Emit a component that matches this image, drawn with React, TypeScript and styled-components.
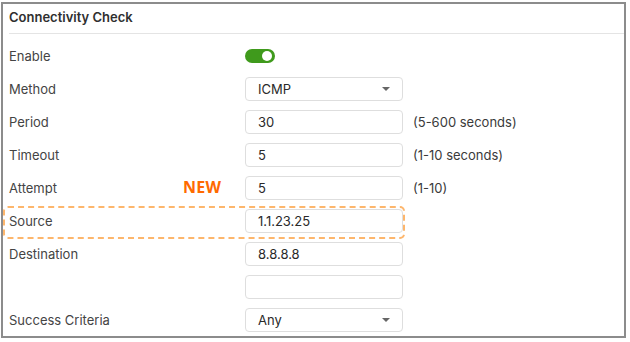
import React from "react";
import styled, { createGlobalStyle } from "styled-components";

const Global = createGlobalStyle`
  html, body { margin: 0; padding: 0; background: #fff; }
  body { font-family: Inter, "Noto Sans", sans-serif; }
`;

const Frame = styled.div`
  position: absolute;
  left: 1px;
  top: 2px;
  width: 621px;
  height: 332px;
  border: 2px solid #8c8c8c;
  background: #fff;
  overflow: hidden;
`;

const Header = styled.div`
  margin-left: 6px;
  height: 30px;
  box-sizing: border-box;
  display: flex;
  align-items: center;
  padding-bottom: 3px;
  font-size: 13px;
  font-weight: 600;
  color: #2f2f2f;
  border-bottom: 1px solid #e4e4e4;
`;

const Rows = styled.div`
  padding-top: 5px;
  display: flex;
  flex-direction: column;
`;

const Row = styled.div`
  position: relative;
  height: 33.1px;
  display: grid;
  grid-template-columns: 226px 158px auto;
  column-gap: 10px;
  align-items: center;
  padding-left: 6px;
`;

const Label = styled.div`
  font-size: 13px;
  color: #444;
`;

const Box = styled.div`
  height: 24px;
  box-sizing: border-box;
  border: 1px solid #dedede;
  border-radius: 4px;
  display: flex;
  align-items: center;
  justify-content: space-between;
  padding: 0 12px 0 12px;
  font-size: 13px;
  color: #2a2a2a;
  background: #fff;
`;

const Hint = styled.div`
  font-size: 13px;
  color: #3a3a3a;
`;

const Toggle = styled.div`
  width: 30px;
  height: 14px;
  border-radius: 7px;
  background: #3f9a1c;
  position: relative;
  &::after {
    content: "";
    position: absolute;
    right: 3px;
    top: 2px;
    width: 10px;
    height: 10px;
    border-radius: 50%;
    background: #fff;
  }
`;

const Caret = styled.span`
  width: 0;
  height: 0;
  border-left: 4px solid transparent;
  border-right: 4px solid transparent;
  border-top: 4px solid #666;
`;

const NewTag = styled.span`
  position: absolute;
  left: 180px;
  top: 5px;
  font-family: "Open Sans", sans-serif;
  font-weight: 700;
  font-size: 16px;
  color: #ff6a00;
  letter-spacing: 0.3px;
`;

const Highlight = styled.div`
  position: absolute;
  left: 0;
  top: 2px;
  width: 402px;
  height: 33px;
  box-sizing: border-box;
  border: 2px dashed #fdb66c;
  border-radius: 5px;
  pointer-events: none;
`;

type Field = {
  label: string;
  kind: "toggle" | "select" | "input";
  value?: string;
  hint?: string;
  tag?: boolean;
  highlight?: boolean;
};

const fields: Field[] = [
  { label: "Enable", kind: "toggle" },
  { label: "Method", kind: "select", value: "ICMP" },
  { label: "Period", kind: "input", value: "30", hint: "(5-600 seconds)" },
  { label: "Timeout", kind: "input", value: "5", hint: "(1-10 seconds)" },
  { label: "Attempt", kind: "input", value: "5", hint: "(1-10)", tag: true },
  { label: "Source", kind: "input", value: "1.1.23.25", highlight: true },
  { label: "Destination", kind: "input", value: "8.8.8.8" },
  { label: "", kind: "input", value: "" },
  { label: "Success Criteria", kind: "select", value: "Any" },
];

export default function App() {
  return (
    <>
      <Global />
      <Frame>
        <Header>Connectivity Check</Header>
        <Rows>
          {fields.map((f, i) => (
            <Row key={i}>
              <Label>{f.label}</Label>
              <div>
                {f.kind === "toggle" ? (
                  <Toggle />
                ) : (
                  <Box>
                    <span>{f.value}</span>
                    {f.kind === "select" && <Caret />}
                  </Box>
                )}
              </div>
              <Hint>{f.hint}</Hint>
              {f.tag && <NewTag>NEW</NewTag>}
              {f.highlight && <Highlight />}
            </Row>
          ))}
        </Rows>
      </Frame>
    </>
  );
}
